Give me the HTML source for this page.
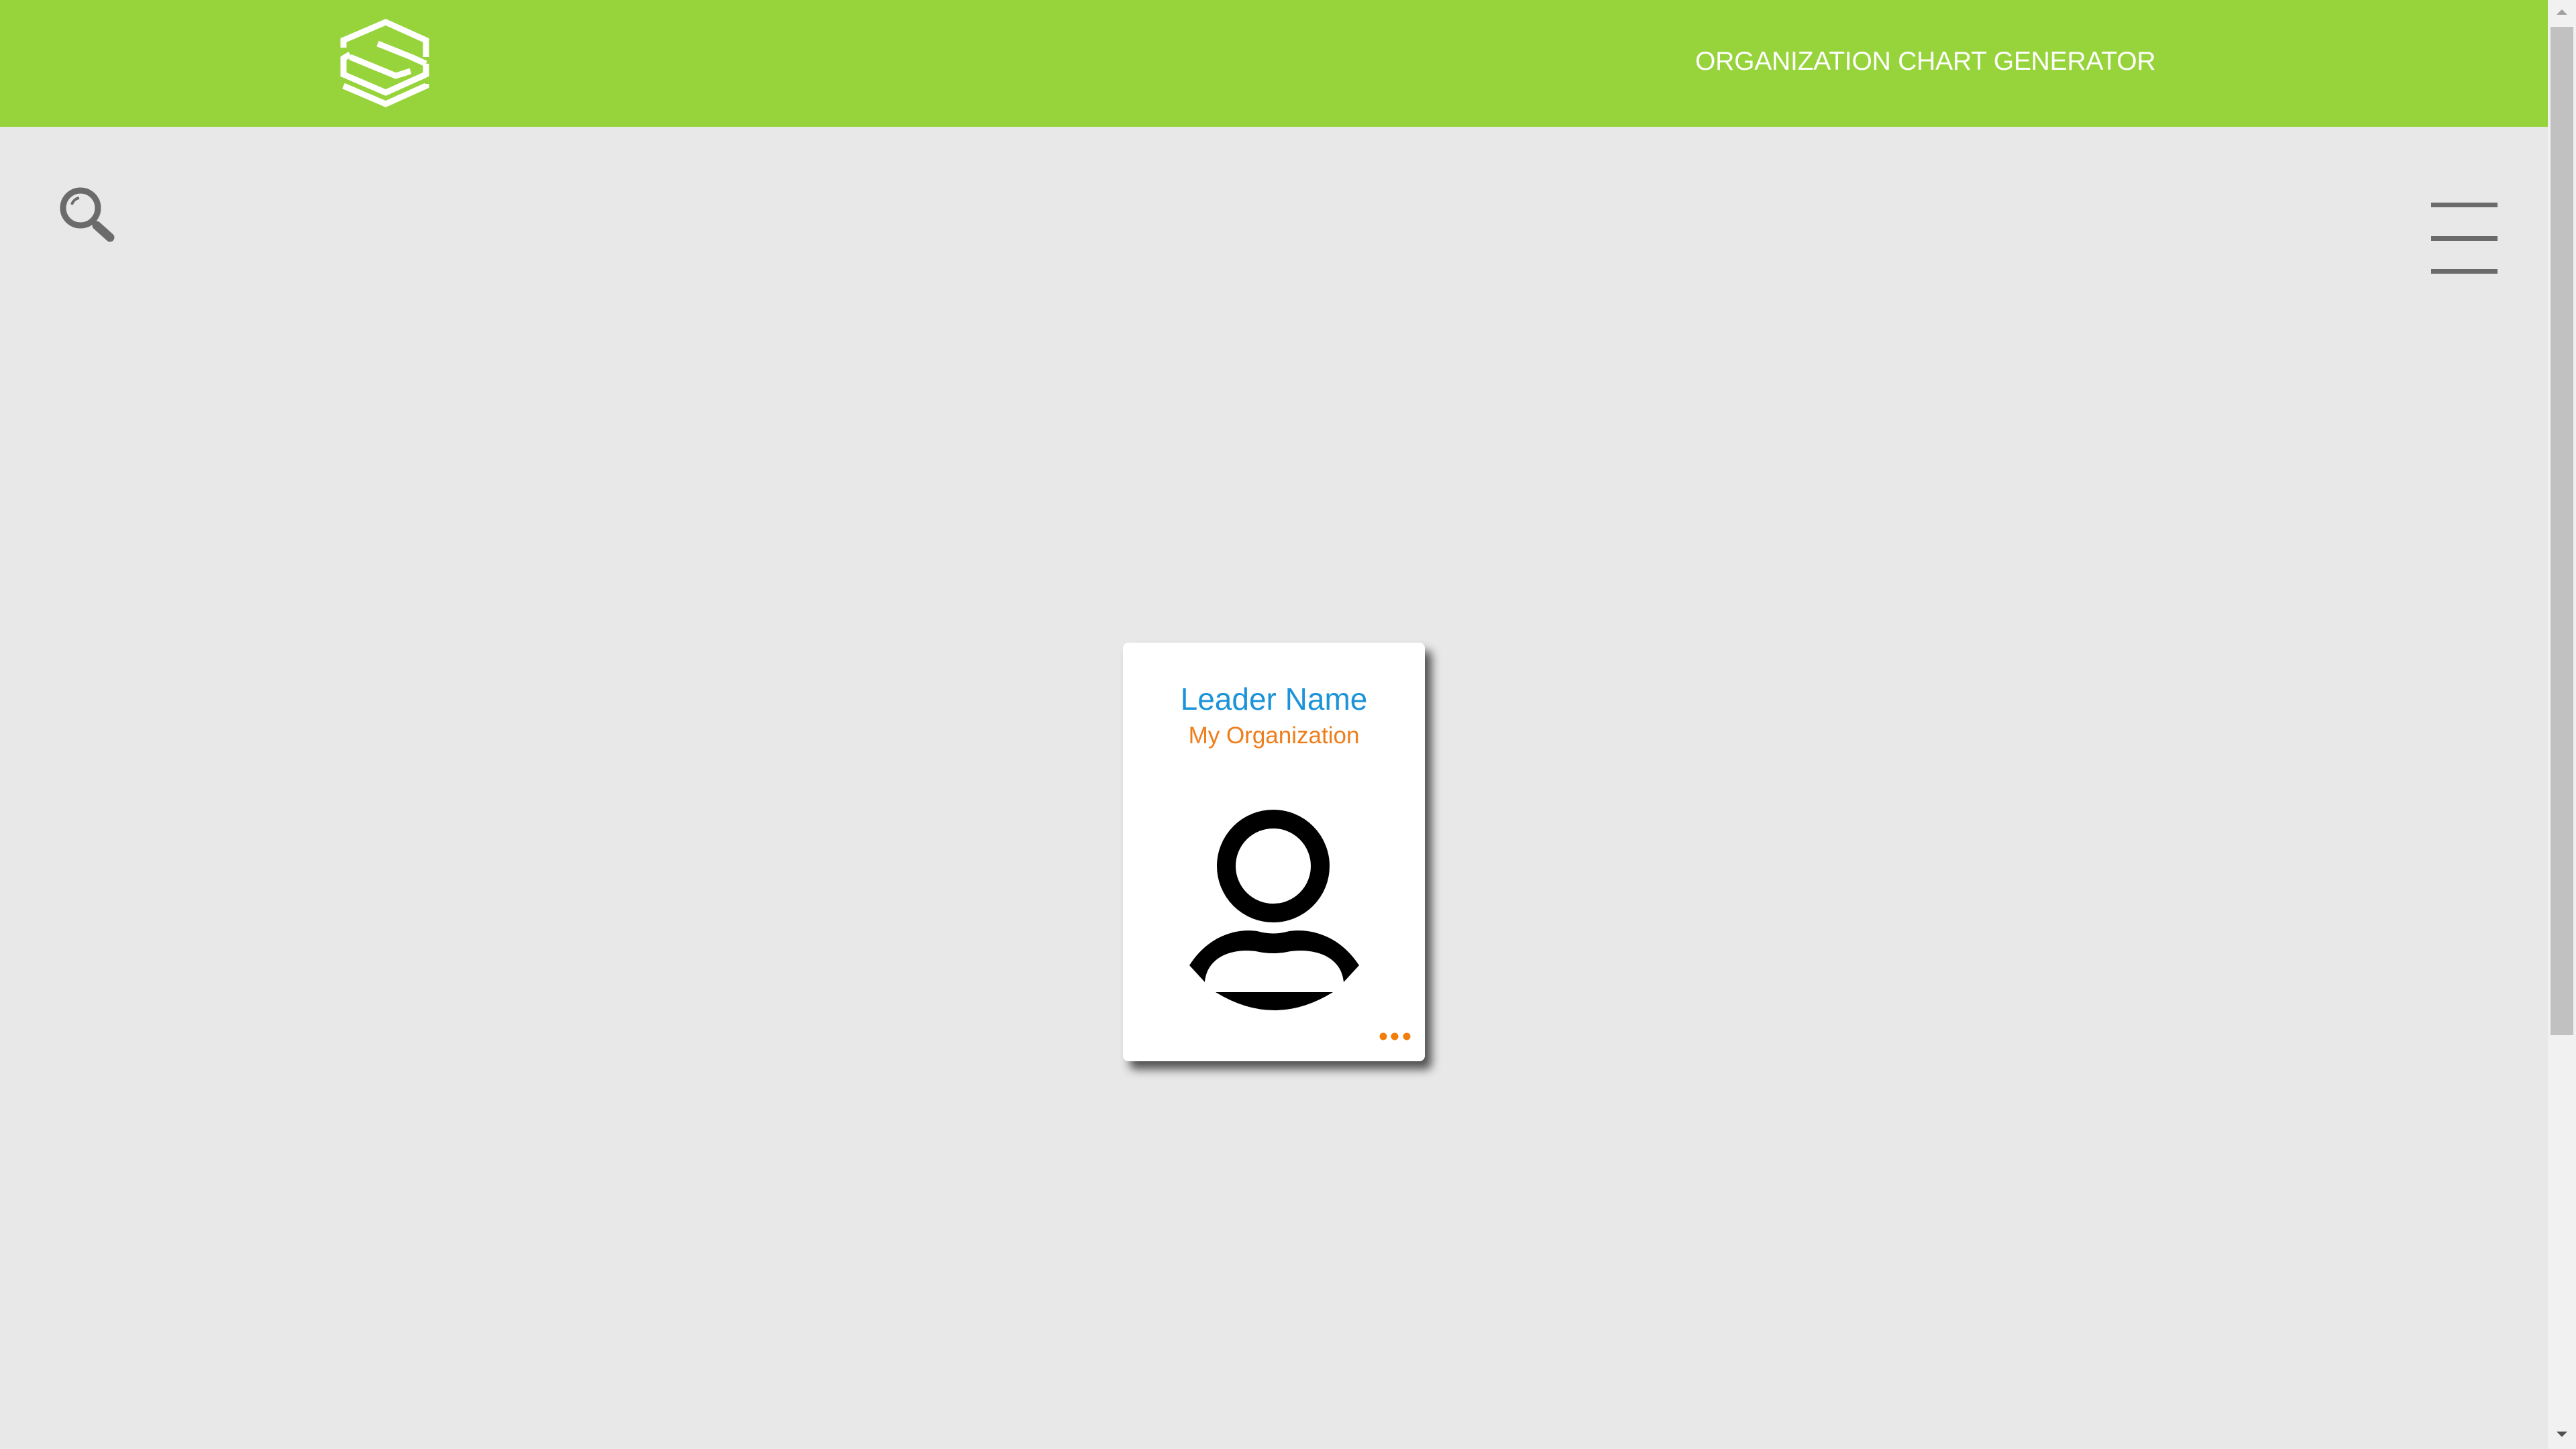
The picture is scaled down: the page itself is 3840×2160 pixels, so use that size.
<!DOCTYPE html>
<html><head><meta charset="utf-8">
<style>
html,body{margin:0;padding:0;width:3840px;height:2160px;overflow:hidden;background:#e8e8e8;font-family:"Liberation Sans",sans-serif;}
.header{position:absolute;left:0;top:0;width:3798px;height:189px;background:#97d43b;}
.title{position:absolute;left:2527px;top:70px;font-size:39px;color:#fff;letter-spacing:-0.2px;white-space:nowrap;}
.sb{position:absolute;left:3798px;top:0;width:42px;height:2160px;background:#f1f1f1;}
.thumb{position:absolute;left:3802px;top:40px;width:34px;height:1503px;background:#c1c1c1;}
.card{position:absolute;left:1674px;top:958px;width:450px;height:624px;background:#fff;border-radius:8px;box-shadow:10px 12px 14px rgba(0,0,0,0.65);}
.name{position:absolute;left:0;width:450px;top:1015px;text-align:center;font-size:46px;color:#1a93d8;}
.org{position:absolute;left:0;width:450px;top:1077px;text-align:center;font-size:35px;color:#ef7d1a;}
.ham{position:absolute;left:3624px;width:99px;height:7px;background:#6b6b6b;}
</style></head><body>
<div class="header">
<svg style="position:absolute;left:505px;top:28px" width="140" height="134" viewBox="-7 -5 140 134">
<g fill="none" stroke="#fff" stroke-width="9" stroke-linejoin="miter">
<path d="M0,38 L0,27 L63,0 L123,27 L123,52"/>
<path d="M51,32 L101,52"/>
<path d="M101,52 L123,62"/>
<path d="M10,48 L0,54 L0,78 L63,105 L123,78 L123,62"/>
<path d="M10,52 L78,80 L100,73"/>
<path d="M0,95 L63,122 L123,95 L123,92"/>
</g>
</svg>
<div class="title">ORGANIZATION CHART GENERATOR</div>
</div>
<div class="sb"></div><div class="thumb"></div>
<svg style="position:absolute;left:3802px;top:8px" width="34" height="20"><path d="M9,14 L17,6 L25,14Z" fill="#a0a0a0"/></svg>
<svg style="position:absolute;left:3802px;top:2128px" width="34" height="20"><path d="M9,6 L17,14 L25,6Z" fill="#505050"/></svg>

<svg style="position:absolute;left:60px;top:250px" width="140" height="140">
<circle cx="60" cy="60" r="26" fill="none" stroke="#6b6b6b" stroke-width="9"/>
<path d="M47,55 A14,14 0 0 1 58,45" fill="none" stroke="#6b6b6b" stroke-width="4"/>
<path d="M84,86 L104,104" stroke="#6b6b6b" stroke-width="13" stroke-linecap="round"/>
</svg>

<div class="ham" style="top:302px"></div>
<div class="ham" style="top:352px"></div>
<div class="ham" style="top:401px"></div>

<div class="card"></div>
<div class="name" style="left:1674px">Leader Name</div>
<div class="org" style="left:1674px">My Organization</div>
<svg style="position:absolute;left:1674px;top:958px" width="450" height="624">
<circle cx="224" cy="333" r="70" fill="none" stroke="#000" stroke-width="28"/>
<path d="M99,481 C125,440 165,425 200,430 Q224,437 248,430 C285,425 325,440 352,481 L329,506 C326,470 290,455 250,460 Q224,466 198,460 C160,455 125,470 122,506 Z" fill="#000"/>
<path d="M138,521 L313,521 Q226,575 138,521 Z" fill="#000"/>
<circle cx="388" cy="587" r="5.5" fill="#f07d0c"/>
<circle cx="405" cy="587" r="5.5" fill="#f07d0c"/>
<circle cx="423" cy="587" r="5.5" fill="#f07d0c"/>
</svg>
</body></html>
